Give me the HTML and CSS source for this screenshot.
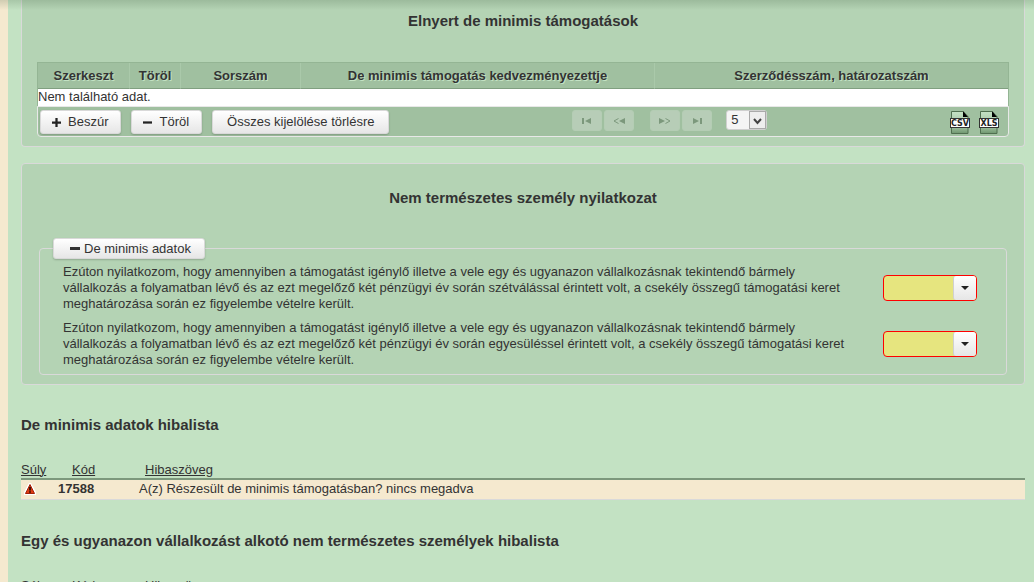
FILE: index.html
```html
<!DOCTYPE html>
<html lang="hu">
<head>
<meta charset="utf-8">
<title>De minimis adatok</title>
<link rel="stylesheet" href="styles.css">
</head>
<body>
<main class="page">
  <section class="panel panel-first">
    <h2 class="panel-title">Elnyert de minimis támogatások</h2>
    <div class="datatable">
      <table class="grants">
        <colgroup><col class="col-edit"><col class="col-delete"><col class="col-number"><col><col></colgroup>
        <thead>
          <tr><th>Szerkeszt</th><th>Töröl</th><th>Sorszám</th><th>De minimis támogatás kedvezményezettje</th><th>Szerződésszám, határozatszám</th></tr>
        </thead>
        <tbody><tr><td colspan="5">Nem található adat.</td></tr></tbody>
      </table>
      <div class="toolbar">
        <div class="actions">
          <button type="button" class="btn"><svg class="sign" viewBox="0 0 8 8"><path d="M3 0h2v3h3v2H5v3H3V5H0V3h3z"/></svg>Beszúr</button>
          <button type="button" class="btn"><svg class="sign" viewBox="0 0 8 8"><path d="M0 3h8v2H0z"/></svg>Töröl</button>
          <button type="button" class="btn btn-wide">Összes kijelölése törlésre</button>
        </div>
        <div class="pager">
          <button type="button" class="page-btn" disabled aria-label="Első oldal"><svg viewBox="0 0 12 8"><path d="M1 1h2v6H1zM10 1v6L4 4z"/></svg></button>
          <button type="button" class="page-btn" disabled aria-label="Előző oldal"><svg viewBox="0 0 12 8"><path d="M12 1v6L6 4z"/><path class="open" d="M5.500 1.500L1 4l4.500 2.500"/></svg></button>
          <span class="page-numbers"></span>
          <button type="button" class="page-btn" disabled aria-label="Következő oldal"><svg viewBox="0 0 12 8"><path d="M0 1v6l6-3z"/><path class="open" d="M6.500 1.500L11 4 6.500 6.500"/></svg></button>
          <button type="button" class="page-btn" disabled aria-label="Utolsó oldal"><svg viewBox="0 0 12 8"><path d="M2 1v6l6-3zM9 1h2v6H9z"/></svg></button>
          <span class="size-wrap">
            <select class="page-size" aria-label="Sorok száma"><option>5</option><option>10</option></select>
            <svg class="size-arrow" viewBox="0 0 17 18"><rect class="arrow-box" x=".5" y=".5" width="16" height="17"/><path d="M5 8l3.500 4L12 8" /></svg>
          </span>
        </div>
        <div class="exports">
          <a href="#csv" aria-label="CSV"><svg class="file" viewBox="0 0 20 23"><defs><linearGradient id="sheet" x2="0" y2="1"><stop offset="0" stop-color="#c5e2c5"/><stop offset=".7" stop-color="#9fc09f"/><stop offset="1" stop-color="#6f966f"/></linearGradient></defs><path class="sheet" d="M1.500 .5H13l5 5v17H1.500z"/><path d="M13 0l5 6h-5z"/><rect class="label" x=".5" y="7.500" width="19" height="9"/><text x="10" y="15">CSV</text></svg></a>
          <a href="#xls" aria-label="XLS"><svg class="file" viewBox="0 0 20 23"><path class="sheet" d="M1.500 .5H13l5 5v17H1.500z"/><path d="M13 0l5 6h-5z"/><rect class="label" x=".5" y="7.500" width="19" height="9"/><text x="10" y="15">XLS</text></svg></a>
        </div>
      </div>
    </div>
  </section>

  <section class="panel">
    <h2 class="panel-title">Nem természetes személy nyilatkozat</h2>
    <fieldset class="group">
      <legend><button type="button" class="toggle"><span class="dash"></span>De minimis adatok</button></legend>
      <div class="question">
        <label for="split">Ezúton nyilatkozom, hogy amennyiben a támogatást igénylő illetve a vele egy és ugyanazon vállalkozásnak tekintendő bármely vállalkozás a folyamatban lévő és az ezt megelőző két pénzügyi év során szétválással érintett volt, a csekély összegű támogatási keret meghatározása során ez figyelembe vételre került.</label>
        <span class="choice-wrap"><select id="split" class="choice"><option></option><option>Igen</option><option>Nem</option></select><span class="choice-arrow"></span></span>
      </div>
      <div class="question">
        <label for="merge">Ezúton nyilatkozom, hogy amennyiben a támogatást igénylő illetve a vele egy és ugyanazon vállalkozásnak tekintendő bármely vállalkozás a folyamatban lévő és az ezt megelőző két pénzügyi év során egyesüléssel érintett volt, a csekély összegű támogatási keret meghatározása során ez figyelembe vételre került.</label>
        <span class="choice-wrap"><select id="merge" class="choice"><option></option><option>Igen</option><option>Nem</option></select><span class="choice-arrow"></span></span>
      </div>
    </fieldset>
  </section>

  <section class="errors">
    <h2>De minimis adatok hibalista</h2>
    <table class="error-table">
      <colgroup><col class="col-weight"><col class="col-code"><col></colgroup>
      <thead><tr><th>Súly</th><th>Kód</th><th>Hibaszöveg</th></tr></thead>
      <tbody><tr>
        <td><svg class="warn" viewBox="0 0 12 12"><path class="halo" d="M5 0h2l5 9v3H0V9z"/><path class="tri" d="M6 1.500l4.500 9h-9z"/><path d="M5.300 4h1.400v3.500H5.300zM5.300 8.300h1.400v1.400H5.300z"/></svg></td>
        <td class="code">17588</td>
        <td>A(z) Részesült de minimis támogatásban? nincs megadva</td>
      </tr></tbody>
    </table>
  </section>

  <section class="errors">
    <h2>Egy és ugyanazon vállalkozást alkotó nem természetes személyek hibalista</h2>
    <table class="error-table">
      <colgroup><col class="col-weight"><col class="col-code"><col></colgroup>
      <thead><tr><th>Súly</th><th>Kód</th><th>Hibaszöveg</th></tr></thead>
    </table>
  </section>
</main>
</body>
</html>
```
FILE: styles.css
```css
* { box-sizing: border-box; }
body {
  margin: 0;
  padding-left: 8px;
  height: 100vh;
  overflow: hidden;
  background: #f5e9cf;
  color: #333;
  font: 13px/16px "Liberation Sans", Arial, sans-serif;
}
button, select { font: inherit; color: inherit; margin: 0; }
h2 { margin: 0; font-size: 15px; line-height: 18px; }
table { width: 100%; border-collapse: collapse; table-layout: fixed; }

.page { min-height: 100vh; padding: 0 9px 0 13px; background: #c3e2c3; }
.page::before {
  content: "";
  position: absolute;
  inset: 0 0 auto 0;
  height: 10px;
  background: linear-gradient(rgba(60, 90, 60, .2), transparent);
}

.panel {
  margin-bottom: 16px;
  border: 1px solid #d9d9d9;
  border-radius: 4px;
  background: #b4d3b4;
  padding: 25px 17px 9px;
}
.panel-first { border-top: 0; border-radius: 0 0 4px 4px; padding: 12px 15px 9px; }
.panel-title { text-align: center; }

.datatable { margin-top: 32px; }
.grants {
  border: 1px solid #94b594;
  border-bottom: 0;
  border-collapse: separate;
  border-spacing: 0;
}
.grants th {
  height: 26px;
  padding: 0;
  border-left: 1px solid #aac9aa;
  border-bottom: 1px solid #809f80;
  background: #a0c0a0;
  text-shadow: 1px 1px 0 #c3e2c3;
}
.grants th:first-child { border-left: 0; }
.grants td { height: 17px; padding: 0; background: #fff; vertical-align: top; }
.col-edit { width: 91px; }
.col-delete { width: 51px; }
.col-number { width: 120px; }

.toolbar {
  display: flex;
  justify-content: space-between;
  align-items: flex-start;
  padding: 3px 9px 2px 2px;
  border: 1px solid #e8e8e8;
  border-radius: 0 0 4px 4px;
  background: #a0c0a0;
}
.actions { display: flex; gap: 10px; }
.btn, .toggle {
  border: 1px solid #d9d9d9;
  border-radius: 3px;
  background: linear-gradient(#fff, #e6e6e6);
  box-shadow: 0 1px 2px rgba(0, 0, 0, .2);
}
.btn { display: flex; align-items: center; gap: 7px; height: 24px; padding: 0 12px 0 11px; }
.btn-wide { padding: 0 14px; }
.sign { width: 9px; height: 9px; fill: #222; }

.pager { display: flex; align-items: flex-start; gap: 2px; }
.page-btn {
  display: flex;
  align-items: center;
  justify-content: center;
  width: 30px;
  height: 21px;
  padding: 0;
  border: 1px solid #b4cdb4;
  border-radius: 3px;
  background: #b7cdb7;
}
.page-btn svg { width: 12px; height: 8px; fill: #7c987c; }
.page-btn .open { fill: none; stroke: #7c987c; }
.page-numbers { width: 12px; }
.size-wrap { position: relative; margin-left: 12px; height: 20px; }
.page-size {
  appearance: none;
  width: 41px;
  height: 20px;
  padding: 0 4px;
  border: 1px solid #d0d0d0;
  border-radius: 3px;
  background: #f5f5f5;
}
.size-arrow { position: absolute; right: 1px; top: 1px; width: 17px; height: 18px; fill: none; stroke: #444; stroke-width: 2; pointer-events: none; }
.size-arrow .arrow-box { fill: #eee; stroke: #aaa; stroke-width: 1; }
.exports { display: flex; gap: 9px; padding-top: 1px; }
.exports a { display: block; height: 23px; }
.file { width: 20px; height: 23px; fill: #000; }
.file .sheet { fill: url(#sheet); stroke: #4f6f4f; }
.file .label { fill: #fff; stroke: #333; }
.file text { font: bold 8px "DejaVu Sans", sans-serif; text-anchor: middle; fill: #222; }

.group {
  margin: 31px 0 0;
  padding: 5px 29px 6px 13px;
  border: 1px solid #d9d9d9;
  border-radius: 4px;
}
.group legend { padding: 0; }
.toggle { display: flex; align-items: center; gap: 4px; height: 21px; padding: 0 13px 0 16px; }
.dash { width: 10px; height: 3px; background: #333; }
.question { display: flex; justify-content: space-between; align-items: center; padding-left: 10px; margin-bottom: 8px; }
.question:last-child { margin-bottom: 0; }
.question label { max-width: 792px; }
.choice-wrap { position: relative; flex: none; height: 26px; }
.choice {
  appearance: none;
  display: block;
  width: 94px;
  height: 26px;
  border: 1px solid #f00;
  border-radius: 4px;
  background: #e6e57f;
}
.choice-arrow {
  position: absolute;
  right: 1px;
  top: 1px;
  display: flex;
  align-items: center;
  justify-content: center;
  width: 23px;
  height: 24px;
  border-left: 1px solid #d0d0d0;
  border-radius: 3px;
  background: linear-gradient(#fff, #e6e6e6);
  pointer-events: none;
}
.choice-arrow::before { content: ""; border: 4px solid transparent; border-top-color: #222; border-bottom: 0; }

.errors { padding-top: 15px; margin-bottom: 17px; }
.errors h2 { margin-bottom: 27px; }
.error-table th { height: 18px; padding: 0; font-weight: normal; text-align: left; text-decoration: underline; }
.error-table th:nth-child(2) { padding-left: 14px; }
.error-table th:nth-child(3) { padding-left: 6px; }
.error-table td { height: 20px; padding: 0; background: #f5e9cf; border-top: 2px solid #7c987c; border-bottom: 1px solid #d9d9d9; }
.error-table .code { font-weight: bold; }
.col-weight { width: 37px; }
.col-code { width: 81px; }
.warn { display: block; width: 12px; height: 12px; margin-left: 3px; }
.warn .halo { fill: #fff; }
.warn .tri { fill: #e03a12; stroke: #a32008; }
```
